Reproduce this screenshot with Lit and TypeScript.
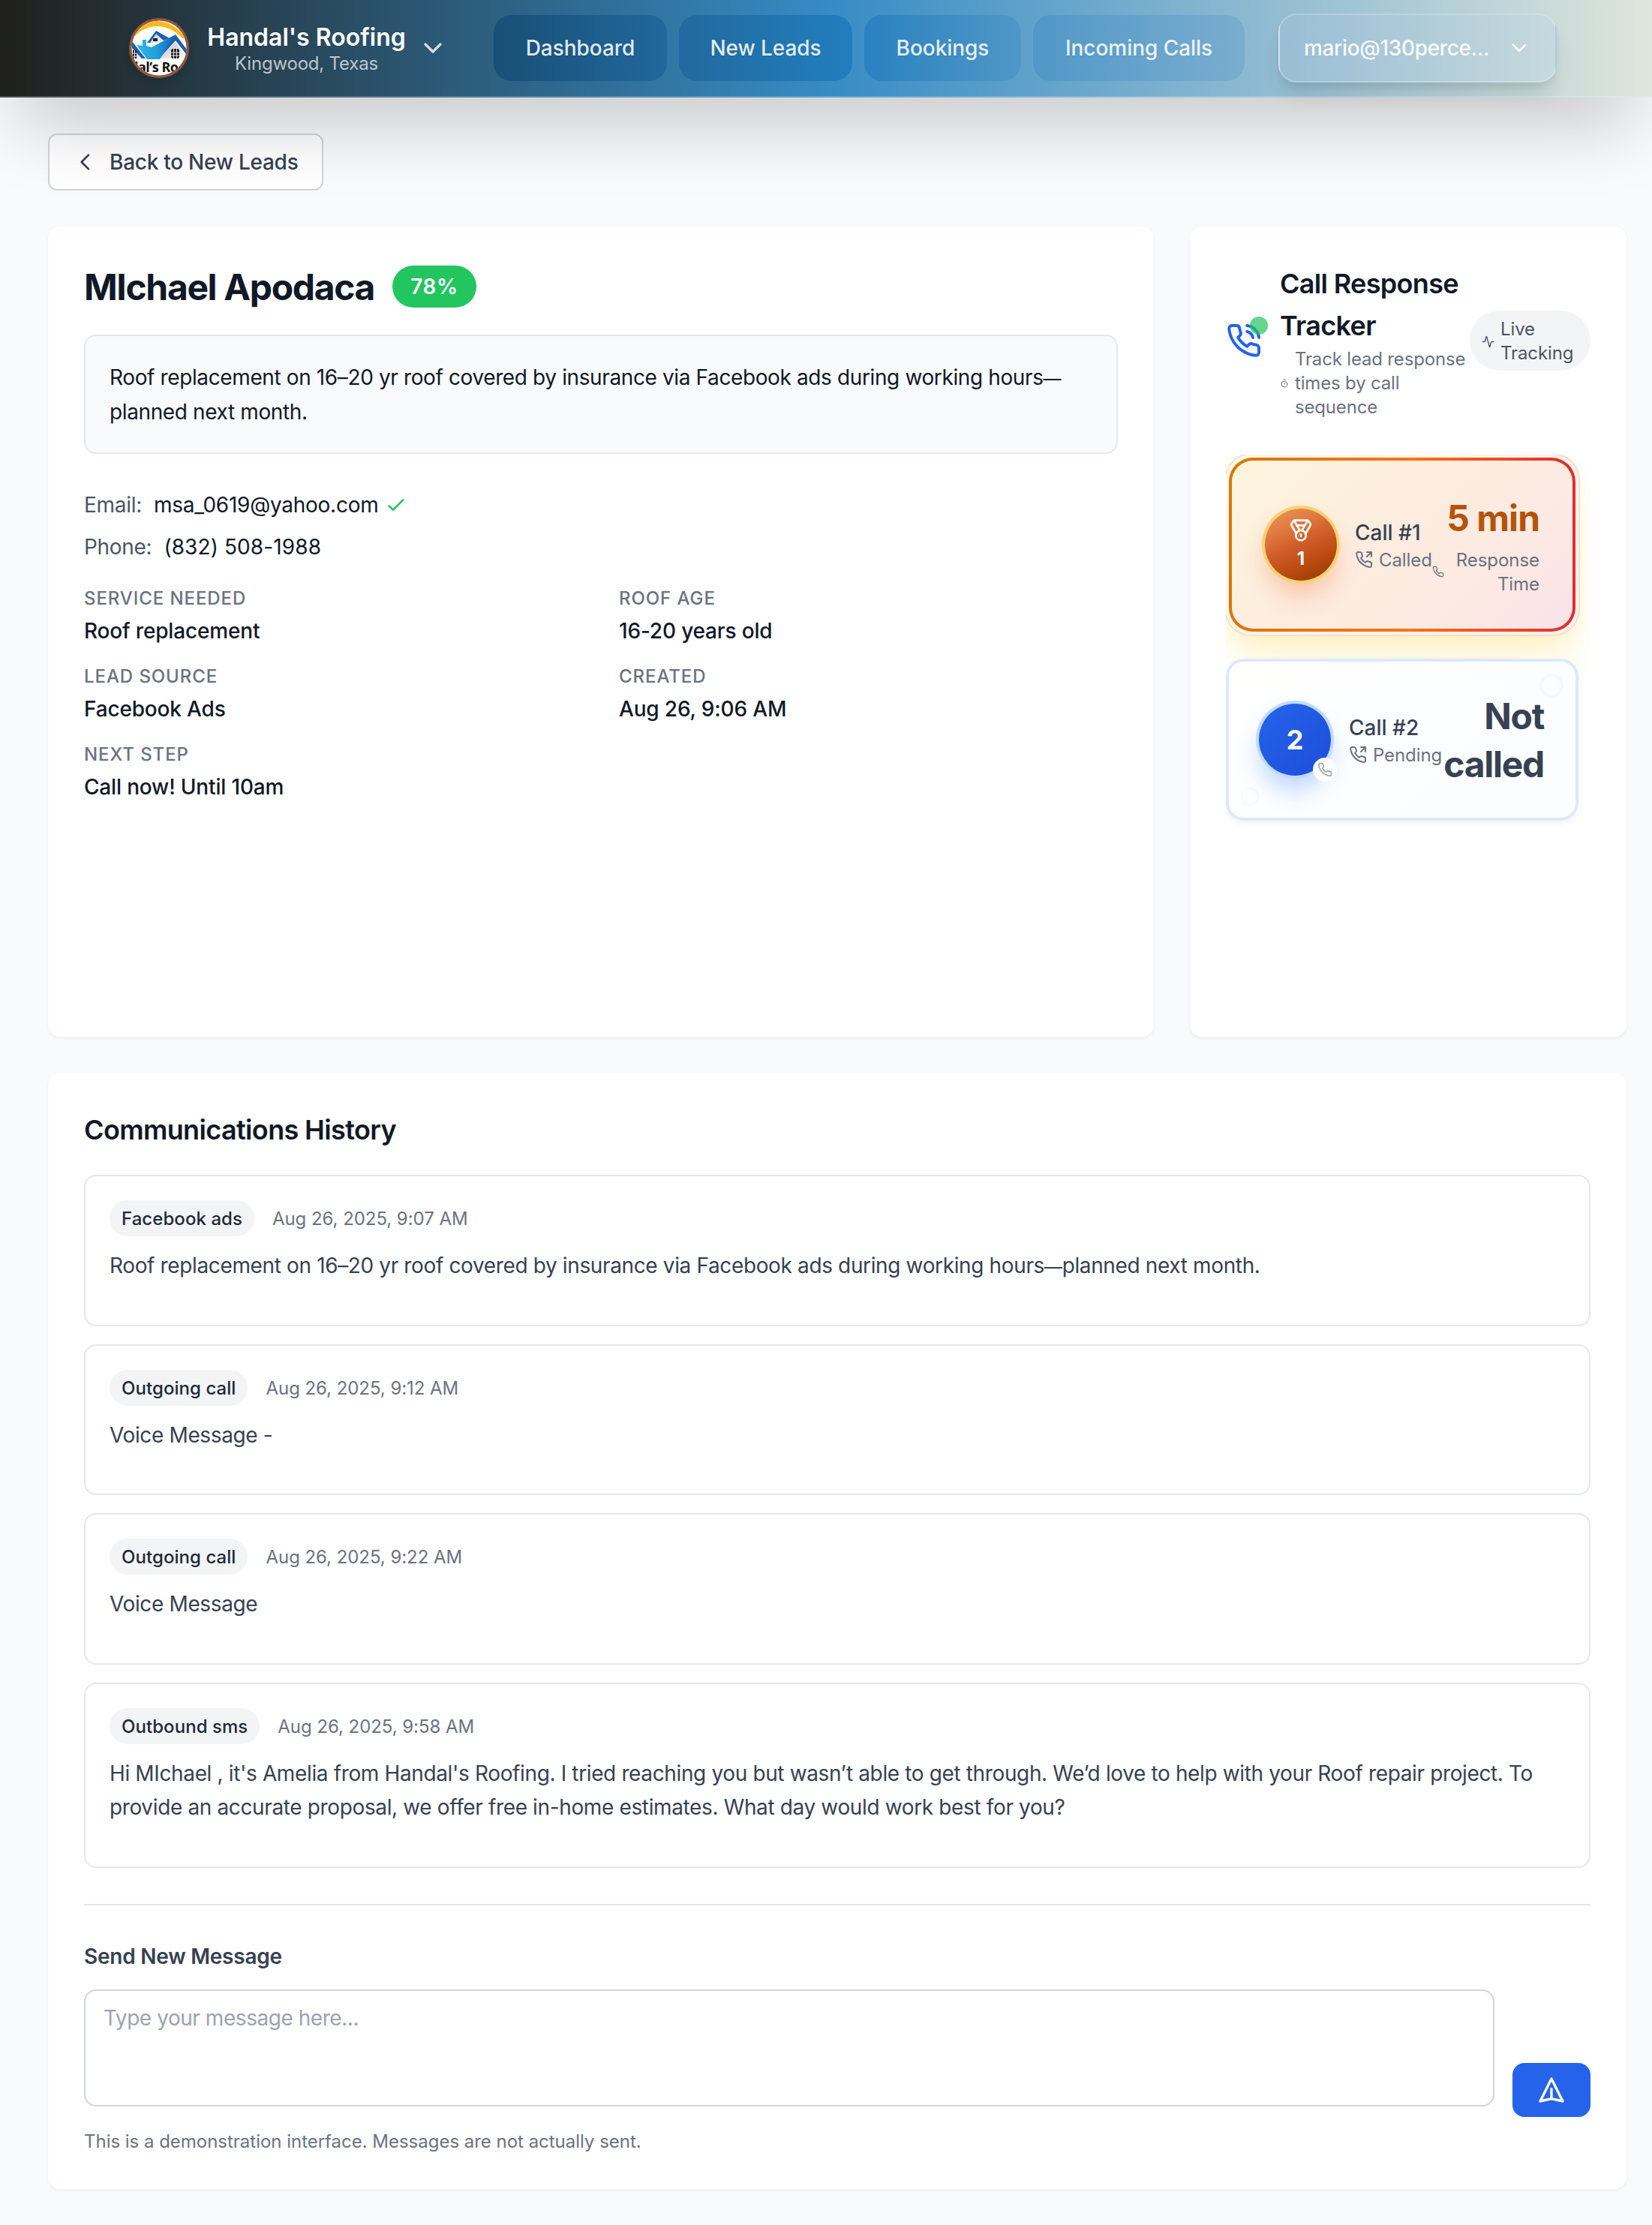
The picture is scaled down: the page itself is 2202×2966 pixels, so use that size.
import { LitElement, html, css, svg } from "lit";
import { customElement, property } from "lit/decorators.js";

const ICONS = {
  chevronDown: svg`<path d="m6 9 6 6 6-6"/>`,
  chevronLeft: svg`<path d="M15 19l-7-7 7-7"/>`,
  check: svg`<path d="M5 13l4 4L19 7"/>`,
  send: svg`<path d="M12 19l9 2-9-18-9 18 9-2zm0 0v-8"/>`,
  phone: svg`<path d="M22 16.92v3a2 2 0 0 1-2.18 2 19.79 19.79 0 0 1-8.63-3.07 19.5 19.5 0 0 1-6-6 19.79 19.79 0 0 1-3.07-8.67A2 2 0 0 1 4.11 2h3a2 2 0 0 1 2 1.72 12.84 12.84 0 0 0 .7 2.81 2 2 0 0 1-.45 2.11L8.09 9.91a16 16 0 0 0 6 6l1.27-1.27a2 2 0 0 1 2.11-.45 12.84 12.84 0 0 0 2.81.7A2 2 0 0 1 22 16.92z"/>`,
  activity: svg`<path d="M22 12h-2.48a2 2 0 0 0-1.93 1.46l-2.35 8.36a.25.25 0 0 1-.48 0L9.24 2.18a.25.25 0 0 0-.48 0l-2.35 8.36A2 2 0 0 1 4.49 12H2"/>`,
  timer: svg`<path d="M10 2h4"/><path d="m12 14 3-3"/><circle cx="12" cy="14" r="8"/>`,
  medal: svg`<path d="M7.21 15 2.66 7.14a2 2 0 0 1 .13-2.2L4.4 2.8A2 2 0 0 1 6 2h12a2 2 0 0 1 1.6.8l1.6 2.14a2 2 0 0 1 .14 2.2L16.79 15"/><path d="M11 12 5.12 2.2"/><path d="m13 12 5.88-9.8"/><path d="M8 7h8"/><circle cx="12" cy="17" r="5"/><path d="M12 18v-2h-.5"/>`,
};
const CALLING = svg`${ICONS.phone}<path d="M14.05 2a9 9 0 0 1 8 7.94"/><path d="M14.05 6A5 5 0 0 1 18 10"/>`;
const OUTGOING = svg`${ICONS.phone}<path d="M22 8V2h-6"/><path d="m16 8 6-6"/>`;

const icon = (shape: unknown, size: number, cls = "") => html`
  <svg class="icon ${cls}" width=${size} height=${size} viewBox="0 0 24 24" fill="none"
    stroke="currentColor" stroke-width="2" stroke-linecap="round" stroke-linejoin="round">${shape}</svg>`;

// Sets em dashes slightly smaller than the running text.
const prose = (text: string) => text.split("—").map((part, i) => (i ? html`<span class="dash">—</span>${part}` : part));

const base = css`
  * { box-sizing: border-box; }
  :host { display: block; font-family: Inter, "Liberation Sans", sans-serif; }
  .icon { display: block; flex: none; }
  .dash { font-size: 24px; line-height: 1; }
`;

@customElement("company-logo")
class CompanyLogo extends LitElement {
  static styles = css`
    :host { display: block; flex: none; width: 80px; height: 80px; border-radius: 50%; box-shadow: 0 8px 12px -2px rgba(0, 0, 0, .12); }
    svg { display: block; }
    .word { font-family: "Open Sans", "Noto Sans", sans-serif; font-size: 18px; font-weight: 700; }
  `;
  render() {
    return html`<svg width="80" height="80" viewBox="0 0 80 80">
      <defs>
        <clipPath id="round"><circle cx="40" cy="40" r="36.5"/></clipPath>
        <linearGradient id="wall" x1="0" y1="0" x2="1" y2="1"><stop offset="0" stop-color="#b9bcc2"/><stop offset="1" stop-color="#fff"/></linearGradient>
        <linearGradient id="tick" x1="0" y1="0" x2="1" y2="0"><stop offset="0" stop-color="#2fb5e6"/><stop offset=".5" stop-color="#22a0dc"/><stop offset="1" stop-color="#1560b4"/></linearGradient>
      </defs>
      <circle cx="40" cy="40" r="40" fill="#92593b"/>
      <g clip-path="url(#round)">
        <rect width="80" height="80" fill="#fff"/>
        <path d="M2 22C14 6 26 4 37 4c14 0 30 9 38 23l-4 0C60 16 50 11 38 11 26 11 14 17 8 24z" fill="#fbb91f"/>
        <path d="M27 33 36 19 50 28 46 33z" fill="url(#wall)"/>
        <path d="M24 33 36 17 54 27 46 30 36 21 28 33z" fill="#1a5fb2"/>
        <path d="M32 31v-4h6v4z M34 27h2v4h-2z" fill="#222"/>
        <path d="M5 40 20 54H5z" fill="url(#wall)"/>
        <path d="M40 54 62 32 78 54z" fill="url(#wall)"/>
        <path d="M4 31 22 54H17L4 40z" fill="#1a5fb2"/>
        <path d="M62 22 80 46 76 48 62 30 44 50 38 54z" fill="#1a5fb2"/>
        <path d="M10 36l8 1v-8h5v8l7 2L62 22 41 55H24z" fill="url(#tick)"/>
        <g fill="#1a1a1a"><rect x="56" y="41" width="11" height="13" rx="3"/><rect x="5" y="43" width="5" height="11"/></g>
        <path d="M59.600 40v14M63.400 40v14M56 46h11M56 50h11M7.500 43v11M5 47h5M5 51h5" stroke="#eee" stroke-width="1"/>
        <text class="word" x="1" y="71.500" fill="#111" textLength="65" lengthAdjust="spacing">dal’s Ro</text>
      </g>
    </svg>`;
  }
}

@customElement("site-header")
class SiteHeader extends LitElement {
  static styles = [base, css`
    :host { position: relative; z-index: 2; }
    .bar { display: flex; align-items: center; height: 130px; padding: 0 0 0 172px; border-bottom: 2px solid rgba(255, 255, 255, .2);
      background: linear-gradient(90deg, #20201d, #368bc5 50%, #dfe6dc) border-box; box-shadow: 0 50px 100px -24px rgba(0, 0, 0, .25); }
    .company { display: flex; align-items: center; gap: 16px; color: rgba(255, 255, 255, .8); }
    .title { display: flex; flex-direction: column; align-items: center; gap: 1px; margin-left: 8px; width: 265px; white-space: nowrap; }
    .name { font-size: 32px; line-height: 40px; font-weight: 600; color: #fff; }
    .place { font-size: 24px; line-height: 28px; letter-spacing: -.2px; color: rgba(255, 255, 255, .7); }
    nav { display: flex; gap: 16px; margin-left: 61px; }
    .item { display: flex; align-items: center; justify-content: center; height: 88px; border-radius: 24px; font-size: 28px; font-weight: 500; letter-spacing: -.05px; color: rgba(255, 255, 255, .88); white-space: nowrap; }
    .a { width: 231px; background: linear-gradient(90deg, #184f76, #21689c); }
    .b { width: 231px; background: linear-gradient(90deg, #22699e, #217ebe); }
    .c { width: 209px; background: linear-gradient(90deg, #2a81c0, #4f97c7); }
    .d { width: 282px; background: linear-gradient(90deg, #5098c8, #7badcf); }
    .user { display: flex; align-items: center; justify-content: space-between; width: 371px; height: 92px; margin-left: 45px; padding: 0 32px; border: 2px solid rgba(255, 255, 255, .22); border-radius: 24px;
      background: linear-gradient(90deg, #98bed5, #c7d9dd); box-shadow: 0 20px 30px -6px rgba(0, 0, 0, .1), 0 8px 12px -4px rgba(0, 0, 0, .08); font-size: 28px; font-weight: 500; letter-spacing: -.33px; color: rgba(255, 255, 255, .95); }
  `];
  render() {
    return html`<header class="bar">
      <div class="company">
        <company-logo></company-logo>
        <div class="title"><span class="name">Handal's Roofing</span><span class="place">Kingwood, Texas</span></div>
        ${icon(ICONS.chevronDown, 40)}
      </div>
      <nav>
        <span class="item a">Dashboard</span><span class="item b">New Leads</span><span class="item c">Bookings</span><span class="item d">Incoming Calls</span>
      </nav>
      <div class="user"><span>mario@130perce...</span>${icon(ICONS.chevronDown, 32)}</div>
    </header>`;
  }
}

@customElement("lead-details")
class LeadDetails extends LitElement {
  static styles = [base, css`
    .head { display: flex; align-items: center; gap: 24px; height: 64px; }
    h1 { margin: 0; padding-top: 2px; font-size: 48px; line-height: 62px; font-weight: 700; letter-spacing: -1.36px; color: #111827; }
    .score { width: 112px; text-align: center; padding: 8px 0; border-radius: 28px; background: #22c55e; color: #fff; font-size: 28px; line-height: 40px; font-weight: 600; letter-spacing: .5px; }
    .summary { margin: 32px 0 48px; padding: 33px 32px 31px; border: 2px solid #e5e7eb; border-radius: 16px; background: #f9fafb; font-size: 28px; line-height: 45.5px; letter-spacing: -.38px; color: #111827; }
    .line { display: flex; align-items: center; margin-bottom: 16px; font-size: 28px; line-height: 40px; color: #111827; }
    .key { margin-right: 16px; letter-spacing: -.3px; color: #4b5563; }
    .email { letter-spacing: -.26px; }
    .phone { letter-spacing: .1px; }
    .ok { margin-left: 8px; color: #22c55e; }
    .facts { display: grid; grid-template-columns: 1fr 1fr; gap: 24px 48px; margin-top: 32px; }
    .label { padding-top: 1px; margin-bottom: 7px; font-size: 24px; line-height: 32px; font-weight: 500; letter-spacing: .92px; text-transform: uppercase; color: #6b7280; }
    .value { font-size: 28px; line-height: 40px; font-weight: 500; letter-spacing: -.17px; color: #111827; }
  `];
  private facts = [
    ["Service Needed", "Roof replacement"], ["Roof Age", "16-20 years old"],
    ["Lead Source", "Facebook Ads"], ["Created", "Aug 26, 9:06 AM"], ["Next Step", "Call now! Until 10am"],
  ];
  render() {
    return html`
      <div class="head"><h1>MIchael Apodaca</h1><span class="score">78%</span></div>
      <div class="summary">${prose("Roof replacement on 16–20 yr roof covered by insurance via Facebook ads during working hours—planned next month.")}</div>
      <div class="line"><span class="key">Email:</span><span class="email">msa_0619@yahoo.com</span>${icon(ICONS.check, 32, "ok")}</div>
      <div class="line"><span class="key">Phone:</span><span class="phone">(832) 508-1988</span></div>
      <div class="facts">${this.facts.map(([k, v]) => html`<div><div class="label">${k}</div><div class="value">${v}</div></div>`)}</div>`;
  }
}

@customElement("call-tracker")
class CallTracker extends LitElement {
  static styles = [base, css`
    .head { display: flex; align-items: center; height: 208px; }
    .live { position: relative; margin-right: 24px; color: #2563eb; }
    .dot { position: absolute; top: -8px; right: -8px; width: 24px; height: 24px; border-radius: 50%; background: #22c55e; opacity: .7; }
    .copy { width: 253px; flex: none; }
    h2 { margin: 0; font-size: 36px; line-height: 56px; font-weight: 600; letter-spacing: -.68px; color: #111827; }
    .sub { display: flex; align-items: center; gap: 8px; padding-top: 1px; margin-bottom: -1px; font-size: 24px; line-height: 32px; letter-spacing: -.17px; color: #6b7280; }
    .badge { display: flex; align-items: center; gap: 8px; width: 161px; height: 80px; padding: 9px 16px 7px; border-radius: 40px; background: #f3f4f6; color: #4b5563; font-size: 24px; line-height: 32px; letter-spacing: -.1px; }
    .list { display: flex; flex-direction: column; gap: 32px; margin-top: 48px; padding-right: 16px; padding-bottom: 40px; overflow: hidden; }
    .first { margin: -2px -2px -2px -2px; height: 244px; padding: 4px; border: 2px solid rgba(251, 146, 60, .22); border-radius: 36px;
      background: linear-gradient(135deg, #fffaea, #fff3ec 50%, #fff0f3); box-shadow: 0 40px 50px -10px rgba(253, 211, 50, .24), 0 8px 20px rgba(253, 211, 50, .08); }
    .first .row { padding: 0 44px; border: 4px solid transparent; border-radius: 32px;
      background: linear-gradient(135deg, #fcf5dd, #fdecdf 45%, #fdeae2 70%, #fae2e8) padding-box, linear-gradient(90deg, #d97706, #f97316 52%, #dc2f2f) border-box; }
    .row { display: flex; align-items: center; height: 100%; }
    .second { position: relative; height: 216px; border: 4px solid #dbeafe; border-radius: 24px; padding: 0 42px 0 40px; background: linear-gradient(135deg, rgba(255, 255, 255, .88), rgba(250, 252, 255, .85)); box-shadow: 0 4px 8px rgba(0, 0, 0, .05); }
    .num { position: relative; flex: none; display: flex; flex-direction: column; align-items: center; justify-content: center; width: 96px; height: 96px; border-radius: 50%; color: #fff; font-weight: 700; }
    .bronze { font-size: 24px; line-height: 32px; gap: 6px; background: linear-gradient(155deg, #e99a54, #e27e44 25%, #cf5c27 50%, #b84a10 72%, #8a3a05); box-shadow: 0 0 0 4px #fad070, 0 20px 30px 0 rgba(234, 88, 12, .25); }
    .blue { font-size: 36px; background: linear-gradient(135deg, #2563eb, #1d4ed8); box-shadow: 0 0 0 4px #bfdbfe, 0 20px 30px 0 rgba(59, 130, 246, .3); }
    .chip { position: absolute; right: -8px; bottom: -8px; display: flex; align-items: center; justify-content: center; width: 32px; height: 32px; border-radius: 50%; background: #fff; color: #9ca3af; }
    .who { margin-left: 24px; }
    .call { font-size: 28px; line-height: 40px; font-weight: 500; color: #374151; }
    .state { display: flex; align-items: center; gap: 8px; font-size: 24px; line-height: 32px; letter-spacing: -.1px; color: #6b7280; }
    .state span { padding-top: 1px; margin-bottom: -1px; }
    .result { margin-left: auto; text-align: right; }
    .big { padding-top: 1px; margin-bottom: -1px; font-size: 48px; line-height: 64px; font-weight: 700; letter-spacing: -1.3px; color: #374151; }
    .amber { letter-spacing: -1px; color: #b45309; }
    .note { display: flex; align-items: center; justify-content: flex-end; gap: 16px; margin-top: 8px; font-size: 24px; line-height: 32px; letter-spacing: -.05px; color: #6b7280; }
    .note span { padding-top: 1px; margin-bottom: -1px; }
    .ring { position: absolute; border-radius: 50%; }
    .tr { top: 16px; right: 16px; width: 32px; height: 32px; border: 4px solid rgba(219, 234, 254, .2); }
    .bl { bottom: 16px; left: 16px; width: 24px; height: 24px; border: 2px solid rgba(219, 234, 254, .2); }
  `];
  render() {
    return html`
      <div class="head">
        <div class="live">${icon(CALLING, 48)}<span class="dot"></span></div>
        <div class="copy"><h2>Call Response<br>Tracker</h2>
          <div class="sub">${icon(ICONS.timer, 12)}<span>Track lead response<br>times by call<br>sequence</span></div></div>
        <div class="badge">${icon(ICONS.activity, 17)}<span>Live<br>Tracking</span></div>
      </div>
      <div class="list">
        <div class="first"><div class="row">
          <div class="num bronze">${icon(ICONS.medal, 32)}<span>1</span></div>
          <div class="who"><div class="call">Call #1</div><div class="state">${icon(OUTGOING, 24)}<span>Called</span></div></div>
          <div class="result"><div class="big amber">5 min</div><div class="note">${icon(ICONS.phone, 16)}<span>Response<br>Time</span></div></div>
        </div></div>
        <div class="second"><span class="ring tr"></span><span class="ring bl"></span><div class="row">
          <div class="num blue"><span>2</span><span class="chip">${icon(ICONS.phone, 20)}</span></div>
          <div class="who"><div class="call">Call #2</div><div class="state">${icon(OUTGOING, 24)}<span>Pending</span></div></div>
          <div class="result"><div class="big">Not<br>called</div></div>
        </div></div>
      </div>`;
  }
}

@customElement("message-card")
class MessageCard extends LitElement {
  @property() kind = "";
  @property() time = "";
  @property() text = "";
  static styles = [base, css`
    :host { padding: 32px 32px 55px; border: 2px solid #e5e7eb; border-radius: 16px; }
    .meta { display: flex; align-items: center; gap: 24px; margin-bottom: 17px; font-size: 24px; line-height: 32px; color: #6b7280; }
    .kind { padding: 9px 16px 7px; border-radius: 24px; background: #f3f4f6; color: #1f2937; font-weight: 500; letter-spacing: .06px; }
    .time { padding-top: 1px; margin-bottom: -1px; letter-spacing: -.05px; }
    .text { font-size: 28px; line-height: 45.5px; letter-spacing: -.365px; color: #374151; }
  `];
  render() {
    return html`<div class="meta"><span class="kind">${this.kind}</span><span class="time">${this.time}</span></div><div class="text">${prose(this.text)}</div>`;
  }
}

@customElement("app-root")
class AppRoot extends LitElement {
  static styles = [base, css`
    :host { min-height: 2966px; background: #f9fafc; }
    main { padding: 48px 34px 48px 64px; }
    .back { display: inline-flex; align-items: center; gap: 16px; height: 76px; width: 367px; padding: 0 32px; border: 2px solid #d1d5db; border-radius: 12px; background: #fff; color: #374151; font-size: 28px; font-weight: 500; letter-spacing: -.26px; white-space: nowrap; vertical-align: top; }
    .card { padding: 48px; border-radius: 16px; background: #fff; box-shadow: 0 2px 4px rgba(0, 0, 0, .05); }
    .top { display: grid; grid-template-columns: 1474px 582px; gap: 48px; height: 1080px; margin: 48px 0; }
    h2 { margin: 0 0 32px; font-size: 36px; line-height: 56px; font-weight: 600; letter-spacing: -.64px; color: #111827; }
    .messages { display: flex; flex-direction: column; gap: 24px; }
    .compose { margin-top: 48px; padding-top: 48px; border-top: 2px solid #e5e7eb; }
    .label { font-size: 28px; line-height: 40px; font-weight: 600; letter-spacing: -.24px; color: #374151; }
    .row { display: flex; align-items: flex-end; gap: 24px; height: 170px; margin: 24px 0 17px; }
    .input { flex: 1; align-self: flex-start; height: 156px; padding: 16px 24px; border: 2px solid #d1d5db; border-radius: 16px; font-size: 28px; line-height: 40px; letter-spacing: -.45px; color: #9ca3af; }
    .send { display: flex; align-items: center; justify-content: center; width: 104px; height: 72px; border-radius: 16px; background: #2563eb; color: #fff; }
    .hint { margin-bottom: -1px; font-size: 24px; line-height: 32px; letter-spacing: -.02px; color: #6b7280; }
  `];
  private messages = [
    ["Facebook ads", "Aug 26, 2025, 9:07 AM", "Roof replacement on 16–20 yr roof covered by insurance via Facebook ads during working hours—planned next month."],
    ["Outgoing call", "Aug 26, 2025, 9:12 AM", "Voice Message -"],
    ["Outgoing call", "Aug 26, 2025, 9:22 AM", "Voice Message"],
    ["Outbound sms", "Aug 26, 2025, 9:58 AM", "Hi MIchael , it's Amelia from Handal's Roofing. I tried reaching you but wasn’t able to get through. We’d love to help with your Roof repair project. To provide an accurate proposal, we offer free in-home estimates. What day would work best for you?"],
  ];
  render() {
    return html`
      <site-header></site-header>
      <main>
        <div class="back">${icon(ICONS.chevronLeft, 32)}<span>Back to New Leads</span></div>
        <div class="top">
          <section class="card"><lead-details></lead-details></section>
          <section class="card"><call-tracker></call-tracker></section>
        </div>
        <section class="card">
          <h2>Communications History</h2>
          <div class="messages">${this.messages.map(([k, t, x]) => html`<message-card .kind=${k} .time=${t} .text=${x}></message-card>`)}</div>
          <div class="compose">
            <div class="label">Send New Message</div>
            <div class="row"><div class="input">Type your message here...</div><div class="send">${icon(ICONS.send, 40)}</div></div>
            <div class="hint">This is a demonstration interface. Messages are not actually sent.</div>
          </div>
        </section>
      </main>`;
  }
}
